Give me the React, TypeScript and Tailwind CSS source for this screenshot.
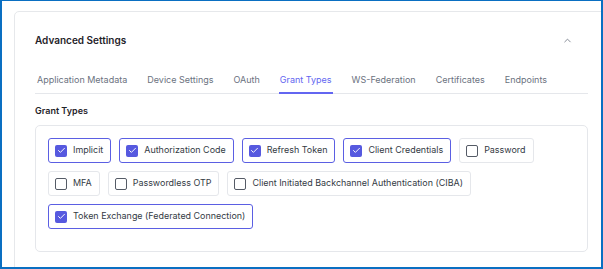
import { ChevronUp, Check } from "lucide-react";

const tabs = [
  "Application Metadata",
  "Device Settings",
  "OAuth",
  "Grant Types",
  "WS-Federation",
  "Certificates",
  "Endpoints",
];

const grants = [
  { label: "Implicit", on: true },
  { label: "Authorization Code", on: true },
  { label: "Refresh Token", on: true },
  { label: "Client Credentials", on: true },
  { label: "Password", on: false },
  { label: "MFA", on: false },
  { label: "Passwordless OTP", on: false },
  { label: "Client Initiated Backchannel Authentication (CIBA)", on: false },
  { label: "Token Exchange (Federated Connection)", on: true },
];

function GrantChip({ label, on }: { label: string; on: boolean }) {
  return (
    <label
      className={
        on
          ? "flex h-[25px] items-center gap-[6px] whitespace-nowrap rounded-[3px] border border-[#5b5fe3] pl-[6px] pr-[7px]"
          : "flex h-[25px] items-center gap-[6px] whitespace-nowrap rounded-[3px] border border-[#e5e7eb] pl-[6px] pr-[7px]"
      }
    >
      {on ? (
        <span className="flex h-[12px] w-[12px] items-center justify-center rounded-[2px] bg-[#5659df]">
          <Check className="h-[9px] w-[9px] text-white" strokeWidth={2.5} />
        </span>
      ) : (
        <span className="h-[12px] w-[12px] rounded-[2px] border border-[#555b66] bg-white" />
      )}
      <span className="text-[8.95px] leading-none text-[#333a44]">{label}</span>
    </label>
  );
}

export default function App() {
  return (
    <div className="h-[269px] w-[603px] overflow-hidden border-b-2 border-l-2 border-r-2 border-t border-[#0a6fc2] bg-white pl-[12px] pt-[10px] font-['Inter',sans-serif]">
      <div className="h-[300px] w-[620px] rounded-[5px] border border-[#e6e8eb] pl-[20px]">
        <div className="w-[553px]">
          <div className="flex h-[56px] items-center justify-between">
            <h2 className="text-[10px] font-semibold text-[#1f2329]">Advanced Settings</h2>
            <ChevronUp className="mr-[15px] h-[11px] w-[11px] text-[#6b7280]" strokeWidth={1.75} />
          </div>

          <div className="flex gap-[18px] border-b border-[#e5e7eb] pl-[1px]">
            {tabs.map((t) => (
              <div
                key={t}
                className={
                  t === "Grant Types"
                    ? "-mb-px flex h-[26px] items-center whitespace-nowrap border-b-2 border-[#6366f1] px-px text-[9px] text-[#6366f1]"
                    : "-mb-px flex h-[26px] items-center whitespace-nowrap border-b-2 border-transparent px-px text-[9px] text-[#6b7280]"
                }
              >
                {t}
              </div>
            ))}
          </div>

          <div className="mt-[10px] text-[9px] font-semibold leading-[14px] text-[#1f2329]">Grant Types</div>

          <div className="mt-[7px] flex flex-wrap gap-[8px] rounded-[5px] border border-[#e5e7eb] px-[12px] pb-[22px] pt-[12px]">
            {grants.map((g) => (
              <GrantChip key={g.label} label={g.label} on={g.on} />
            ))}
          </div>
        </div>
      </div>
    </div>
  );
}
